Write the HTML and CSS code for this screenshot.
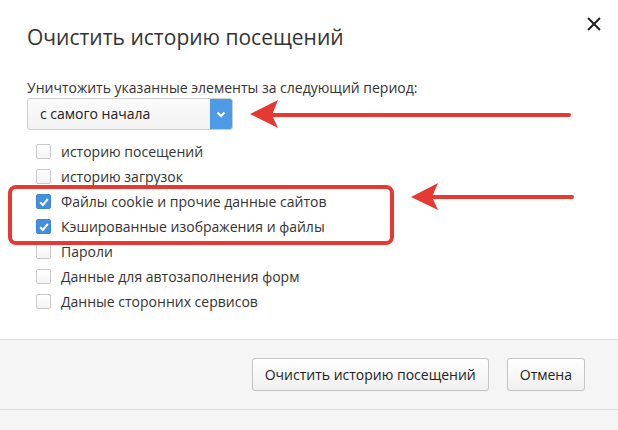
FILE: index.html
```html
<!DOCTYPE html>
<html lang="ru">
<head>
<meta charset="utf-8">
<title>Очистить историю посещений</title>
<link rel="stylesheet" href="styles.css">
</head>
<body>
<div class="dialog">
  <div class="head">
    <h1 class="title">Очистить историю посещений</h1>
    <button class="close" aria-label="Закрыть">
      <svg width="14" height="14" viewBox="0 0 14 14"><path d="M1 1 L13 13 M13 1 L1 13" stroke="#1e1e1e" stroke-width="1.9" fill="none"/></svg>
    </button>
  </div>
  <div class="content">
    <div class="period-label">Уничтожить указанные элементы за следующий период:</div>
    <div class="select">
      <span class="select-text">с самого начала</span>
      <span class="select-btn"><svg width="10" height="7" viewBox="0 0 10 7"><path d="M1.5 1.5 L5 5 L8.5 1.5" stroke="#fff" stroke-width="2" fill="none"/></svg></span>
    </div>
    <ul class="checks">
      <li class="check"><span class="box"></span><span class="label">историю посещений</span></li>
      <li class="check"><span class="box"></span><span class="label">историю загрузок</span></li>
      <li class="check"><span class="box checked"><svg width="12" height="12" viewBox="0 0 12 12"><path d="M2.2 6.3 L4.9 9 L9.8 3" stroke="#fff" stroke-width="2" fill="none"/></svg></span><span class="label">Файлы cookie и прочие данные сайтов</span></li>
      <li class="check"><span class="box checked"><svg width="12" height="12" viewBox="0 0 12 12"><path d="M2.2 6.3 L4.9 9 L9.8 3" stroke="#fff" stroke-width="2" fill="none"/></svg></span><span class="label">Кэшированные изображения и файлы</span></li>
      <li class="check"><span class="box"></span><span class="label">Пароли</span></li>
      <li class="check"><span class="box"></span><span class="label">Данные для автозаполнения форм</span></li>
      <li class="check"><span class="box"></span><span class="label">Данные сторонних сервисов</span></li>
    </ul>
  </div>
  <div class="footer">
    <button class="btn">Очистить историю посещений</button>
    <button class="btn">Отмена</button>
  </div>
  <div class="below"></div>
  <svg class="annot" width="618" height="430" viewBox="0 0 618 430">
    <rect x="10" y="187" width="382" height="56" rx="6" ry="6" fill="none" stroke="#e53a31" stroke-width="4"/>
    <line x1="272" y1="115" x2="569" y2="115" stroke="#e53a31" stroke-width="4" stroke-linecap="round"/>
    <polygon points="250,114 278,100 272,115 278,128" fill="#e53a31"/>
    <line x1="430" y1="197" x2="572" y2="197" stroke="#e53a31" stroke-width="4" stroke-linecap="round"/>
    <polygon points="411,197 438,183 432,197 438,210" fill="#e53a31"/>
  </svg>
</div>
</body>
</html>
```

FILE: styles.css
```css
html, body {
  margin: 0;
  padding: 0;
  background: #ffffff;
}

body {
  font-family: "Open Sans", "Noto Sans", sans-serif;
  color: #333333;
  width: 618px;
  height: 430px;
  overflow: hidden;
}

.dialog {
  position: relative;
  width: 618px;
  height: 430px;
  display: flex;
  flex-direction: column;
}

.head {
  display: flex;
  justify-content: space-between;
  align-items: flex-start;
  padding: 11px 11px 0 27px;
}

.title {
  margin: 12px 0 0 0;
  font-size: 21px;
  line-height: 28px;
  font-weight: 400;
  color: #333333;
}

.close {
  width: 26px;
  height: 26px;
  padding: 0;
  border: none;
  background: transparent;
  display: flex;
  align-items: center;
  justify-content: center;
}

.content {
  padding: 27px 0 0 27px;
}

.period-label {
  font-size: 14px;
  line-height: 20px;
  color: #333333;
}

.select {
  display: flex;
  width: 206px;
  height: 32px;
  box-sizing: border-box;
  border: 1px solid #cfcfcf;
  border-radius: 3px;
  background: linear-gradient(#fafafa, #f3f3f3);
  overflow: hidden;
}

.select-text {
  flex: 1;
  padding-left: 12px;
  font-size: 14px;
  line-height: 30px;
  color: #222222;
}

.select-btn {
  width: 22px;
  background: #4d9ae6;
  display: flex;
  align-items: center;
  justify-content: center;
}

.checks {
  list-style: none;
  margin: 9px 0 0 0;
  padding: 0 0 0 9px;
}

.check {
  display: flex;
  align-items: center;
  height: 25px;
  gap: 10px;
}

.box {
  width: 15px;
  height: 15px;
  box-sizing: border-box;
  border: 1px solid #c9c9c9;
  border-radius: 2px;
  background: linear-gradient(#ffffff, #f4f4f4);
  display: flex;
  align-items: center;
  justify-content: center;
}

.box.checked {
  border-color: #3d85d6;
  background: #4390e0;
}

.label {
  font-size: 14px;
  line-height: 20px;
  color: #333333;
}

.footer {
  margin-top: auto;
  height: 69px;
  box-sizing: content-box;
  border-top: 1px solid #dedede;
  border-bottom: 1px solid #dedede;
  background: #f5f5f5;
  display: flex;
  justify-content: flex-end;
  align-items: flex-start;
  gap: 18px;
  padding: 0 33px 0 0;
}

.btn {
  margin-top: 18px;
  height: 33px;
  padding: 0 12px;
  font-family: "Open Sans", "Noto Sans", sans-serif;
  font-size: 14px;
  color: #222222;
  border: 1px solid #c4c4c4;
  border-radius: 3px;
  background: linear-gradient(#ffffff, #f0f0f0);
}

.below {
  height: 20px;
  background: #f5f5f5;
}

.annot {
  position: absolute;
  left: 0;
  top: 0;
  pointer-events: none;
}
```
